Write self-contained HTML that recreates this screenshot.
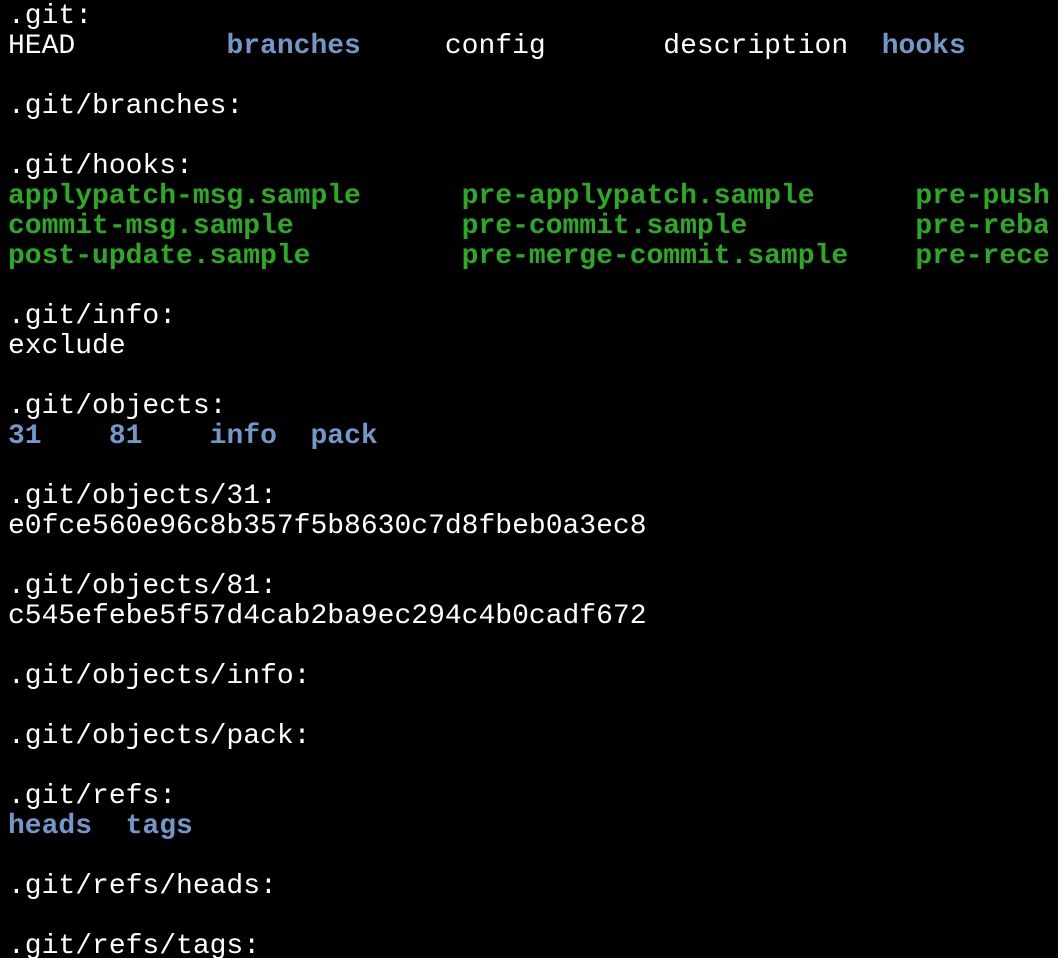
<!DOCTYPE html>
<html><head><meta charset="utf-8"><style>
html,body{margin:0;padding:0;background:#000;width:1058px;height:958px;overflow:hidden}
pre{margin:0;padding:0 0 0 8px;position:relative;top:2px;width:1040px;overflow:hidden;font-family:"Liberation Mono",monospace;font-size:28px;line-height:30px;color:#fff;white-space:pre}
.b{color:#7397c8;font-weight:bold}
.g{color:#2aab22;font-weight:bold}
</style></head><body><pre>.git:
HEAD         <span class="b">branches</span>     config       description  <span class="b">hooks</span>

.git/branches:

.git/hooks:
<span class="g">applypatch-msg.sample      pre-applypatch.sample      pre-push</span>
<span class="g">commit-msg.sample          pre-commit.sample          pre-reba</span>
<span class="g">post-update.sample         pre-merge-commit.sample    pre-rece</span>

.git/info:
exclude

.git/objects:
<span class="b">31</span>    <span class="b">81</span>    <span class="b">info</span>  <span class="b">pack</span>

.git/objects/31:
e0fce560e96c8b357f5b8630c7d8fbeb0a3ec8

.git/objects/81:
c545efebe5f57d4cab2ba9ec294c4b0cadf672

.git/objects/info:

.git/objects/pack:

.git/refs:
<span class="b">heads</span>  <span class="b">tags</span>

.git/refs/heads:

.git/refs/tags:
</pre></body></html>
